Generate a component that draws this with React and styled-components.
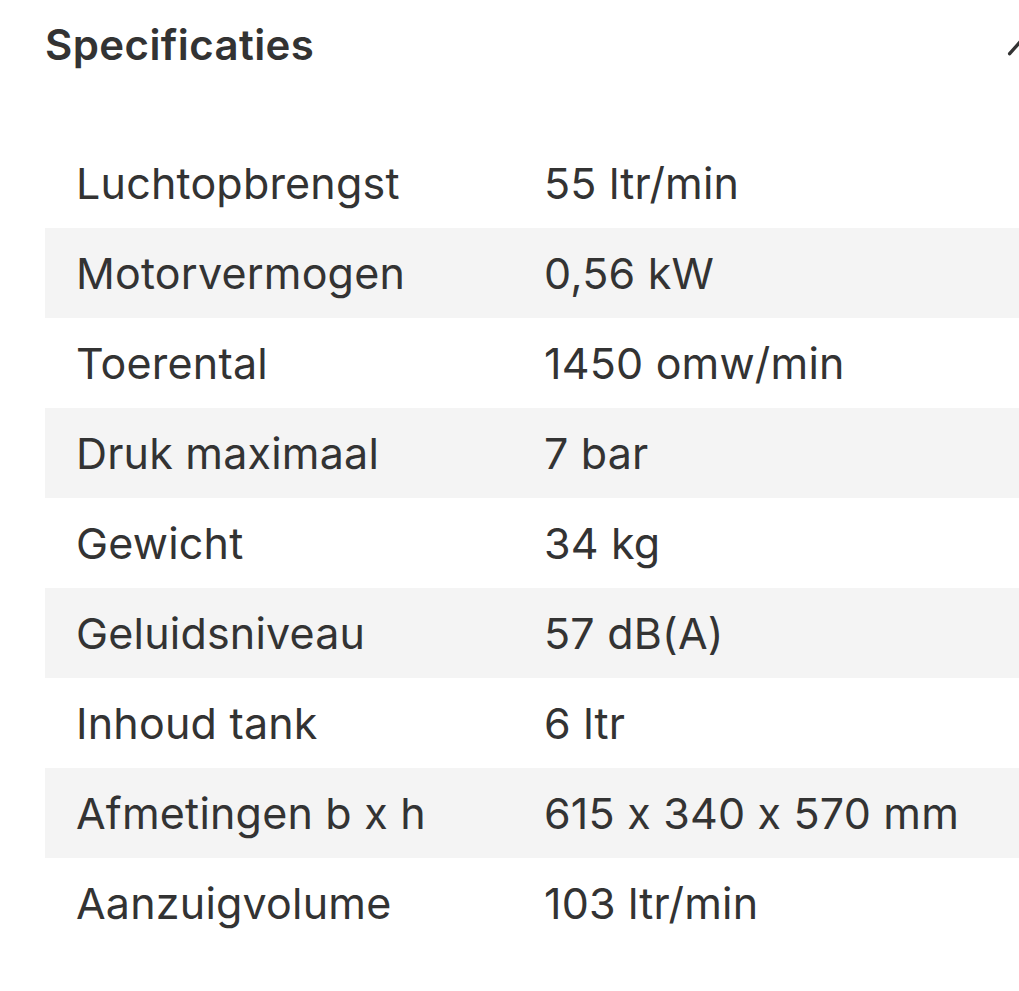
import React from 'react';
import styled, { createGlobalStyle } from 'styled-components';

const specs = [
  ['Luchtopbrengst', '55 ltr/min'],
  ['Motorvermogen', '0,56 kW'],
  ['Toerental', '1450 omw/min'],
  ['Druk maximaal', '7 bar'],
  ['Gewicht', '34 kg'],
  ['Geluidsniveau', '57 dB(A)'],
  ['Inhoud tank', '6 ltr'],
  ['Afmetingen b x h', '615 x 340 x 570 mm'],
  ['Aanzuigvolume', '103 ltr/min'],
];

const App = () => {
  return (
    <Main>
      <GlobalStyle />
      <Header>
        <Heading>Specificaties</Heading>
        <Chevron viewBox="0 0 24 24">
          <path d="M4 16 L12 7 L20 16" />
        </Chevron>
      </Header>
      <Table>
        {specs.map(([label, value], i) => (
          <Row key={label} $striped={i % 2 === 1}>
            <Cell>{label}</Cell>
            <Cell>{value}</Cell>
          </Row>
        ))}
      </Table>
    </Main>
  );
};

export default App;

const GlobalStyle = createGlobalStyle`
  *, *::before, *::after {
    box-sizing: border-box;
  }
  html, body {
    margin: 0;
    background: #fff;
    overflow: hidden;
  }
  body {
    font-family: Inter, "Noto Sans", sans-serif;
    font-feature-settings: "calt" 0;
    color: #333;
  }
`;

const Main = styled.div`
  width: 1060px;
  padding-left: 45px;
  display: flex;
  flex-direction: column;
`;

const Header = styled.div`
  display: flex;
  align-items: center;
  justify-content: space-between;
  height: 90px;
  padding-right: 22px;
`;

const Heading = styled.h2`
  margin: 0;
  margin-top: -2px;
  font-size: 42px;
  font-weight: 600;
  letter-spacing: 0.4px;
  color: #333;
`;

const Chevron = styled.svg`
  width: 34px;
  height: 34px;
  margin-top: 6px;
  fill: none;
  stroke: #333;
  stroke-width: 2.4;
  stroke-linecap: round;
  stroke-linejoin: round;
`;

const Table = styled.div`
  margin-top: 48px;
  display: flex;
  flex-direction: column;
`;

const Row = styled.div`
  display: grid;
  grid-template-columns: 468px 1fr;
  align-items: center;
  height: 90px;
  padding-left: 31px;
  background: ${p => (p.$striped ? '#f4f4f4' : '#fff')};
`;

const Cell = styled.span`
  font-size: 43px;
  font-weight: 400;
  letter-spacing: 0.2px;
  color: #333;
`;
